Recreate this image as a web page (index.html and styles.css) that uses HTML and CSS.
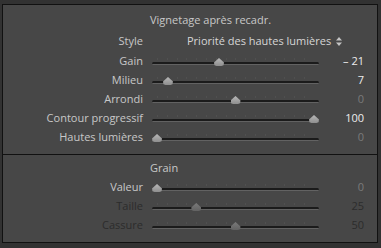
FILE: index.html
```html
<!DOCTYPE html>
<html lang="fr">
<head>
  <meta charset="UTF-8" />
  <title>Effets</title>
  <link rel="stylesheet" href="styles.css">
</head>
<body>

<div class="panel">
  <section class="group first">
    <div class="head">Vignetage après recadr.</div>
    <div class="row style-row">
      <span class="label">Style</span>
      <span class="select">Priorité des hautes lumières
        <svg class="updown" width="6" height="9" viewBox="0 0 6 9"><path d="M3 0 L6 3.5 H0 Z M0 5.5 H6 L3 9 Z" fill="#c4c4c4"/></svg>
      </span>
    </div>
    <div class="row">
      <span class="label">Gain</span>
      <div class="slider"><div class="track"></div><div class="travel"><span class="thumb" style="left:39.5%"></span></div></div>
      <span class="value">– 21</span>
    </div>
    <div class="row">
      <span class="label">Milieu</span>
      <div class="slider"><div class="track"></div><div class="travel"><span class="thumb" style="left:7%"></span></div></div>
      <span class="value">7</span>
    </div>
    <div class="row">
      <span class="label">Arrondi</span>
      <div class="slider"><div class="track"></div><div class="travel"><span class="thumb" style="left:50%"></span></div></div>
      <span class="value zero">0</span>
    </div>
    <div class="row">
      <span class="label">Contour progressif</span>
      <div class="slider"><div class="track"></div><div class="travel"><span class="thumb" style="left:100%"></span></div></div>
      <span class="value">100</span>
    </div>
    <div class="row">
      <span class="label">Hautes lumières</span>
      <div class="slider"><div class="track"></div><div class="travel"><span class="thumb" style="left:0%"></span></div></div>
      <span class="value zero">0</span>
    </div>
  </section>

  <section class="group second">
    <div class="head grain">Grain</div>
    <div class="row">
      <span class="label">Valeur</span>
      <div class="slider"><div class="track"></div><div class="travel"><span class="thumb" style="left:0%"></span></div></div>
      <span class="value zero">0</span>
    </div>
    <div class="row off">
      <span class="label">Taille</span>
      <div class="slider"><div class="track"></div><div class="travel"><span class="thumb" style="left:25%"></span></div></div>
      <span class="value">25</span>
    </div>
    <div class="row off">
      <span class="label">Cassure</span>
      <div class="slider"><div class="track"></div><div class="travel"><span class="thumb" style="left:50%"></span></div></div>
      <span class="value">50</span>
    </div>
  </section>
</div>

</body>
</html>
```

FILE: styles.css
```css
:root {
  --outer: #323232;
  --panel: #474747;
  --label: #c8c8c8;
  --bright: #ececec;
  --dim: #7a7a7a;
  --off: #2c2c2c;
}

body {
  margin: 0;
  background: var(--outer);
  font-family: 'Open Sans', 'Noto Sans', sans-serif;
  font-size: 11px;
  color: var(--label);
}

.panel {
  margin: 4px 3px 0 2px;
  width: 374px;
  height: 237px;
  border: 1px solid #111;
  background: var(--panel);
}

.group.first {
  padding: 4px 0 8px;
  border-bottom: 1px solid #111;
}

.group.second {
  padding: 4px 0 0;
}

.head {
  height: 21px;
  line-height: 21px;
  padding-left: 147px;
  color: var(--label);
}

.head.grain {
  height: 18px;
  line-height: 18px;
}

.row {
  display: grid;
  grid-template-columns: 140px 167px 36px;
  column-gap: 9px;
  height: 19px;
  line-height: 19px;
}

.row .label {
  text-align: right;
  white-space: nowrap;
}

.style-row {
  height: 21px;
  line-height: 21px;
}

.select {
  grid-column: 2 / 4;
  padding-left: 35px;
  color: #d6d6d6;
  white-space: nowrap;
}

.updown {
  margin-left: 2px;
  vertical-align: -1px;
}

.slider {
  position: relative;
  height: 19px;
}

.track {
  position: absolute;
  left: 0;
  right: 0;
  top: 11px;
  height: 2px;
  background: #1b1b1b;
  border-bottom: 1px solid #626262;
  border-radius: 2px;
}

.track::before {
  content: "";
  position: absolute;
  left: 5px;
  right: 5px;
  top: -4px;
  height: 2px;
  background: repeating-linear-gradient(to right, #525252 0 1px, transparent 1px 9.8px);
  opacity: 0.8;
}

.travel {
  position: absolute;
  left: 5px;
  right: 5px;
  top: 0;
  bottom: 0;
}

.thumb {
  position: absolute;
  top: 7px;
  width: 10px;
  height: 8px;
  margin-left: -5px;
  background: linear-gradient(#b8b8b8, #8e8e8e);
  clip-path: polygon(50% 0, 100% 55%, 95% 90%, 75% 100%, 25% 100%, 5% 90%, 0 55%);
}

.value {
  text-align: right;
  color: var(--bright);
}

.value.zero {
  color: var(--dim);
}

.row.off .label,
.row.off .value {
  color: var(--off);
}

.row.off .thumb {
  background: linear-gradient(#7a7a7a, #626262);
}
```
